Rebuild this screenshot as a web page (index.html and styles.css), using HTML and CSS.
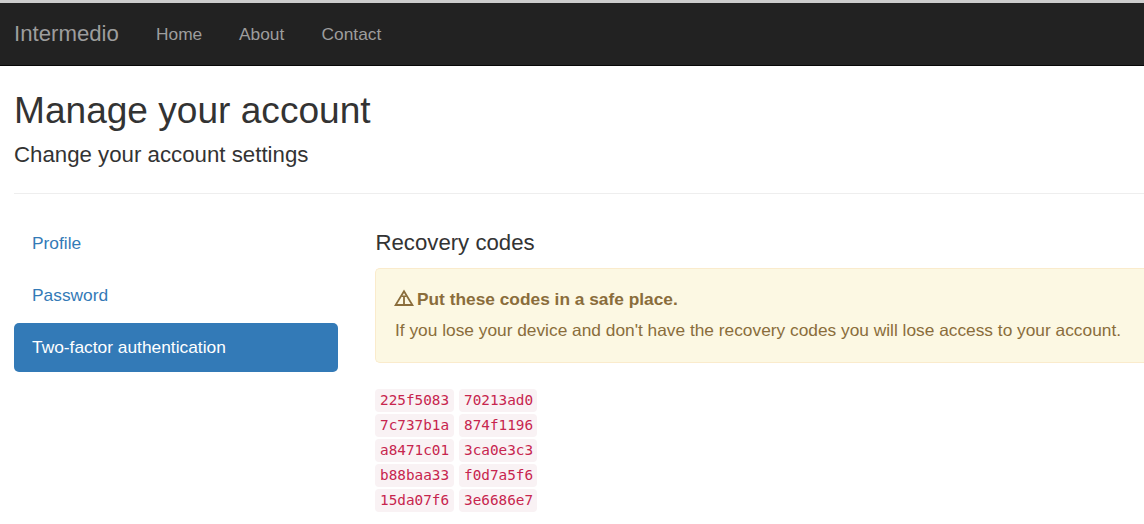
FILE: index.html
```html
<!DOCTYPE html>
<html lang="en">
<head>
<meta charset="utf-8">
<title>Manage your account</title>
<link rel="stylesheet" href="styles.css">
</head>
<body>
<nav class="navbar">
  <a class="brand">Intermedio</a>
  <a class="nav-link home">Home</a>
  <a class="nav-link about">About</a>
  <a class="nav-link">Contact</a>
</nav>
<main class="container">
  <h2 class="title">Manage your account</h2>
  <h4 class="subtitle">Change your account settings</h4>
  <hr class="rule">
  <div class="row">
    <ul class="pills">
      <li class="pill"><span>Profile</span></li>
      <li class="pill"><span>Password</span></li>
      <li class="pill active"><span>Two-factor authentication</span></li>
    </ul>
    <section class="content">
      <h4 class="heading">Recovery codes</h4>
      <div class="alert">
        <p class="alert-title">
          <svg class="icon" viewBox="0 0 21 18"><path d="M10 2.2 18.4 16H1.6Z" fill="none" stroke="currentColor" stroke-width="1.8"/><path d="M7.6 6.4h4.8v1.6h-1.5V15H9.1V8H7.6Z" fill="currentColor"/></svg>
          <strong>Put these codes in a safe place.</strong>
        </p>
        <p class="alert-text"><span>If you lose your device and don't have the recovery codes you will lose access to your account.</span></p>
      </div>
      <div class="codes">
        <code>225f5083</code><code>70213ad0</code>
        <code>7c737b1a</code><code>874f1196</code>
        <code>a8471c01</code><code>3ca0e3c3</code>
        <code>b88baa33</code><code>f0d7a5f6</code>
        <code>15da07f6</code><code>3e6686e7</code>
      </div>
    </section>
  </div>
</main>
</body>
</html>
```
FILE: styles.css
```css
* { box-sizing: border-box; }
body { margin: 0; height: 524px; overflow: hidden; background: #fff; color: #333; font: 17.32px/24px "Liberation Sans", Arial, sans-serif; }
.navbar { display: flex; align-items: center; height: 66px; padding: 0 0 1px 14px; background: #222; border-top: 3px solid #cdcdcd; border-bottom: 1px solid #080808; color: #9d9d9d; }
.brand { width: 142px; font-size: 22.2px; }
.nav-link { font-size: 17.35px; }
.home { width: 83px; }
.about { width: 82.5px; }
.container { padding: 0 0 0 14px; }
h2, h4, p, ul { margin: 0; padding: 0; font-weight: 400; }
.title { padding-top: 23px; font-size: 37.1px; line-height: 42px; }
.subtitle { padding-top: 11px; font-size: 22.25px; line-height: 26px; }
.rule { height: 1px; margin: 25px 0 25px; border: 0; background: #eee; }
.row { display: flex; gap: 37px; }
.pills { display: flex; flex-direction: column; gap: 3px; width: 324px; list-style: none; }
.pill { height: 49px; padding: 0 18px; border-radius: 5px; line-height: 48px; color: #337ab7; font-size: 17.35px; }
.pill.active { background: #337ab7; color: #fff; }
.content { flex: 1; min-width: 0; padding-top: 11px; }
.heading { padding-left: 0.5px; font-size: 22.2px; line-height: 26px; }
.alert { height: 95px; margin-top: 12px; padding: 19px 0 0 18px; border: 1px solid #faebcc; border-right: 0; border-radius: 5px 0 0 5px; background: #fcf8e3; color: #8a6d3b; white-space: nowrap; }
.alert-title { display: flex; align-items: center; gap: 2px; line-height: 22px; }
.alert-text { padding: 8px 0 0 1px; line-height: 24px; }
.icon { width: 21px; height: 18px; margin-top: -3px; }
.codes { display: grid; grid-template-columns: 79px 78px; grid-auto-rows: 23px; gap: 1.8px 5px; margin-top: 26.4px; }
code { padding: 0 5px; border-radius: 4px; background: #f9f2f4; color: #c7254e; font: 14.35px/23px "DejaVu Sans Mono", monospace; }
```
